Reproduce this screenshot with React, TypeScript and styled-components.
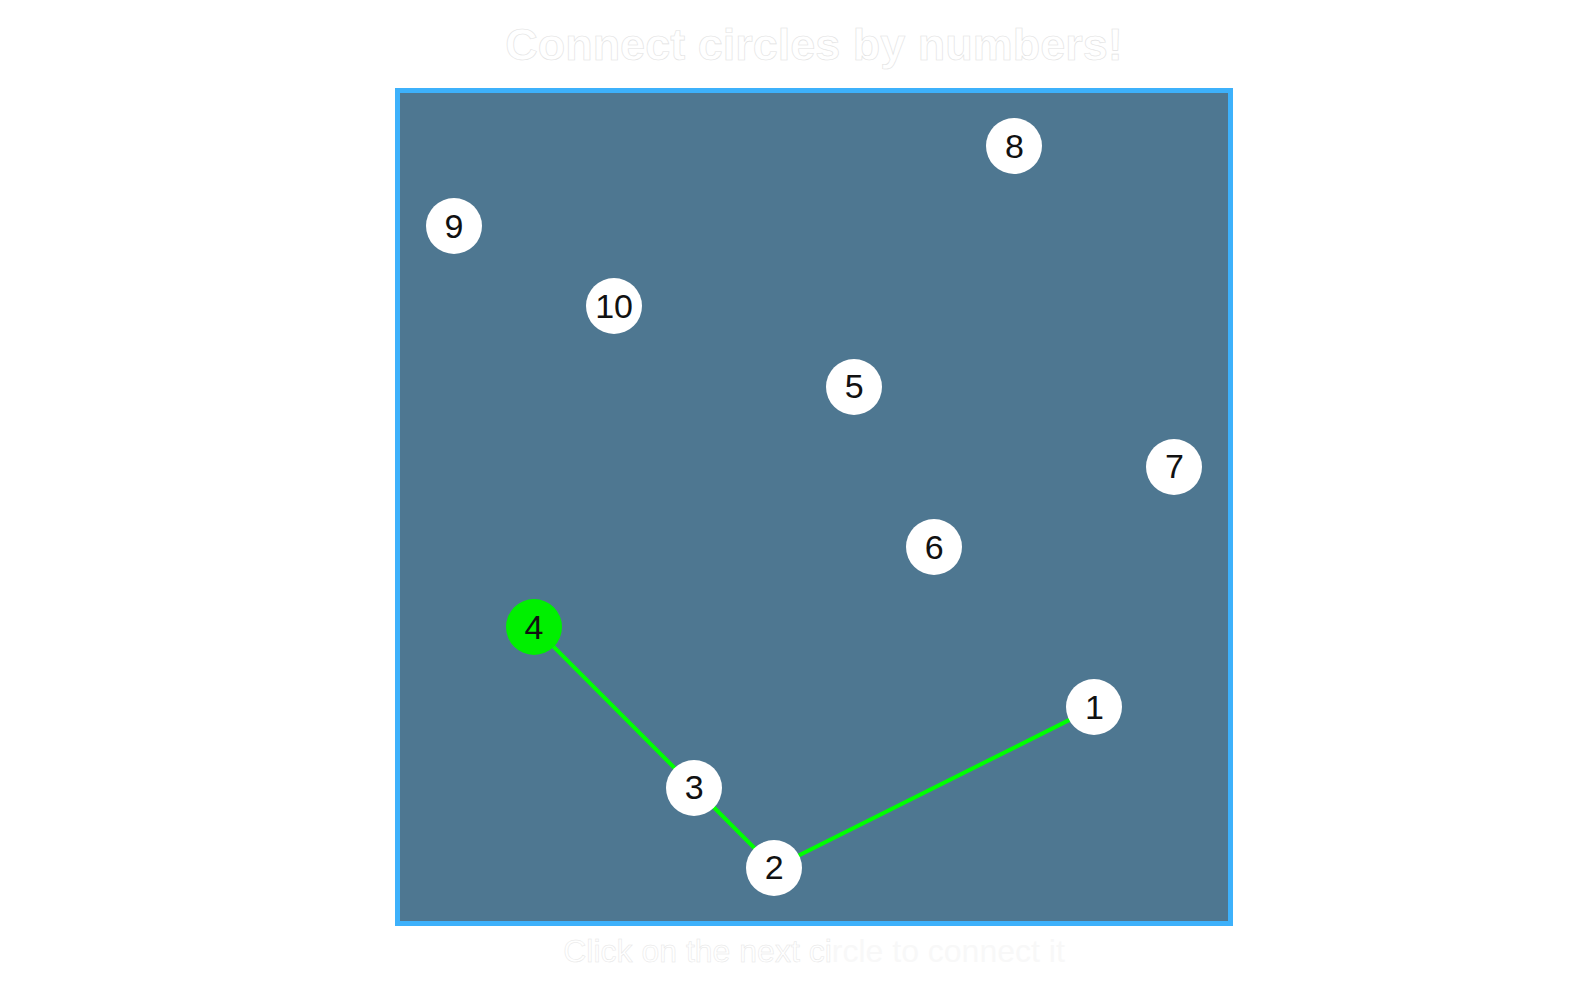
import React from "react";
import styled, { createGlobalStyle } from "styled-components";

const GlobalStyle = createGlobalStyle`
  html, body {
    margin: 0;
    padding: 0;
    background: #ffffff;
    font-family: "Liberation Sans", Arial, sans-serif;
  }
`;

const Page = styled.div`
  display: flex;
  flex-direction: column;
  align-items: center;
  padding: 20px 0 0 35px;
`;

const Title = styled.h1`
  margin: 0;
  font-size: 45px;
  line-height: 50px;
  font-weight: bold;
  color: #ffffff;
  -webkit-text-stroke: 0.6px #e2e2e2;
`;

const Board = styled.div`
  position: relative;
  margin-top: 18px;
  width: 828px;
  height: 828px;
  border: 5px solid #3db1fb;
  background: #4e7791;
`;

const Lines = styled.svg`
  position: absolute;
  inset: 0;
  width: 100%;
  height: 100%;
`;

const Circle = styled.div<{ $done?: boolean }>`
  position: absolute;
  width: 56px;
  height: 56px;
  margin: -28px 0 0 -28px;
  border-radius: 50%;
  background: ${(p) => (p.$done ? "#00f000" : "#ffffff")};
  display: flex;
  align-items: center;
  justify-content: center;
  font-size: 34px;
  color: #111111;
`;

const Hint = styled.p`
  margin: 7px 0 0;
  font-size: 32px;
  line-height: 37px;
  color: #ffffff;
  -webkit-text-stroke: 0.5px #e6e6e6;
`;

const Faded = styled.span`
  color: #f8f8f8;
  -webkit-text-stroke: 0;
`;

// col / row on a 10x10 grid
const points: { n: number; c: number; r: number }[] = [
  { n: 1, c: 8, r: 7 },
  { n: 2, c: 4, r: 9 },
  { n: 3, c: 3, r: 8 },
  { n: 4, c: 1, r: 6 },
  { n: 5, c: 5, r: 3 },
  { n: 6, c: 6, r: 5 },
  { n: 7, c: 9, r: 4 },
  { n: 8, c: 7, r: 0 },
  { n: 9, c: 0, r: 1 },
  { n: 10, c: 2, r: 2 },
];

const px = (c: number) => 54 + c * 80.05;
const py = (r: number) => 53 + r * 80.2;

const connected = 4;

export default function App() {
  const chain = points.filter((p) => p.n <= connected).sort((a, b) => a.n - b.n);
  return (
    <>
      <GlobalStyle />
      <Page>
        <Title>Connect circles by numbers!</Title>
        <Board>
          <Lines>
            {chain.slice(1).map((p, i) => (
              <line
                key={p.n}
                x1={px(chain[i].c)}
                y1={py(chain[i].r)}
                x2={px(p.c)}
                y2={py(p.r)}
                stroke="#00ff00"
                strokeWidth={4}
              />
            ))}
          </Lines>
          {points.map((p) => (
            <Circle
              key={p.n}
              $done={p.n === connected}
              style={{ left: px(p.c), top: py(p.r) }}
            >
              {p.n}
            </Circle>
          ))}
        </Board>
        <Hint>
          Click on the next ci<Faded>rcle to connect it</Faded>
        </Hint>
      </Page>
    </>
  );
}
